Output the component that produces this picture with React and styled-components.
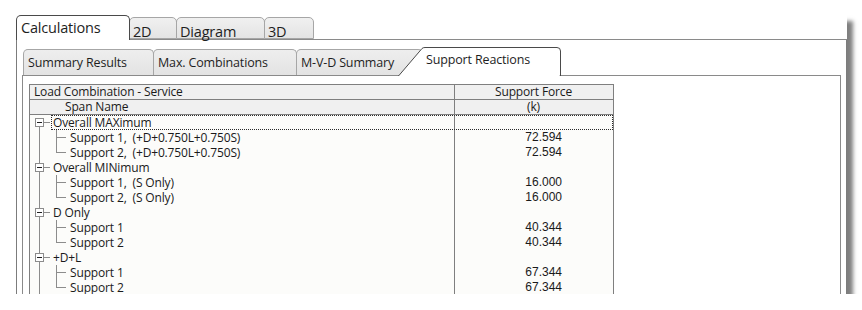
import React from 'react';
import styled, { createGlobalStyle } from 'styled-components';

const GlobalStyle = createGlobalStyle`
  html, body {
    margin: 0;
    padding: 0;
    background: #ffffff;
  }
  body {
    font-family: "Open Sans", "Noto Sans", sans-serif;
    color: #1e1e1e;
  }
`;

const Window = styled.div`
  margin: 15px 0 0 16px;
  width: 831px;
  height: 279px;
  display: flex;
  flex-direction: column;
  background: #ffffff;
  box-shadow: 6px 6px 4px rgba(0, 0, 0, 0.5);
  overflow: hidden;
`;

const TopTabs = styled.div`
  display: flex;
  align-items: flex-end;
  height: 24px;
  border-bottom: 1px solid #8a8a8a;
  margin-left: 113px;
  position: relative;
`;

const TopTabRow = styled.div`
  display: flex;
  align-items: flex-end;
  margin-left: -113px;
`;

const TopTab = styled.div`
  box-sizing: border-box;
  width: ${p => p.w}px;
  height: ${p => (p.active ? 25 : 22)}px;
  margin-left: ${p => (p.first ? 0 : -1)}px;
  margin-bottom: ${p => (p.active ? -1 : 0)}px;
  padding: ${p => (p.active ? '4px 0 0 4px' : '6px 0 0 3px')};
  border: 1px solid ${p => (p.active ? '#4a4a4a' : '#a6a6a6')};
  border-bottom: ${p => (p.active ? 'none' : '1px solid #a6a6a6')};
  border-radius: 5px 5px 0 0;
  background: ${p => (p.active ? '#ffffff' : 'linear-gradient(#f0f0f0, #e4e4e4)')};
  font-size: 14.5px;
  line-height: 16px;
  letter-spacing: -0.2px;
  white-space: nowrap;
  position: relative;
  z-index: ${p => (p.active ? 2 : 1)};
`;

const MainPanel = styled.div`
  flex: 1;
  display: flex;
  flex-direction: column;
  min-height: 0;
  border-left: 1px solid #7c7c7c;
  border-right: 1px solid #7c7c7c;
  padding: 7px 5px 0 5px;
`;

const SubTabs = styled.div`
  display: flex;
  align-items: flex-end;
  height: 28px;
  padding-left: 1px;
  border-bottom: 1px solid #8a8a8a;
`;

const SubTab = styled.div`
  box-sizing: border-box;
  width: ${p => p.w}px;
  height: 26px;
  margin-left: ${p => (p.first ? 0 : -1)}px;
  padding: 5px 0 0 4px;
  border: 1px solid #a6a6a6;
  border-bottom: none;
  border-radius: 5px 5px 0 0;
  background: linear-gradient(#eeeeee, #e3e3e3);
  font-size: 12.5px;
  line-height: 16px;
  letter-spacing: -0.15px;
  white-space: nowrap;
`;

const ActiveSubTab = styled.div`
  box-sizing: border-box;
  position: relative;
  width: 164px;
  height: 29px;
  margin-left: -25px;
  margin-bottom: -1px;
  padding: 5px 0 0 28px;
  font-size: 12.5px;
  line-height: 16px;
  letter-spacing: -0.15px;
  white-space: nowrap;
  z-index: 2;

  svg {
    position: absolute;
    left: 0;
    top: 0;
    z-index: -1;
  }
`;

const InnerPanel = styled.div`
  flex: 1;
  min-height: 0;
  border-left: 1px solid #8a8a8a;
  border-right: 1px solid #8a8a8a;
  padding: 8px 0 0 6px;
  overflow: hidden;
`;

const Grid = styled.div`
  width: 583px;
  border: 1px solid #7f7f7f;
  border-bottom: none;
  background: #fcfcfa;
  font-size: 12px;
  letter-spacing: -0.15px;
  color: #1a1a1a;
`;

const HeadRow = styled.div`
  display: grid;
  grid-template-columns: 424px 158px;
  height: 14px;
  border-bottom: 1px solid #7f7f7f;
  background: #f0f0f0;
  line-height: 14px;
`;

const HeadCell = styled.div`
  padding-left: ${p => p.indent || 0}px;
  text-align: ${p => (p.center ? 'center' : 'left')};
  border-left: ${p => (p.divided ? '1px solid #7f7f7f' : 'none')};
  white-space: pre;
`;

const Row = styled.div`
  display: grid;
  grid-template-columns: 424px 158px;
  height: 15px;
  line-height: 15px;
  position: relative;

  &::after {
    content: '';
    display: ${p => (p.focused ? 'block' : 'none')};
    position: absolute;
    left: 21px;
    right: 0;
    top: 0;
    bottom: 0;
    border: 1px dotted #2a2a2a;
    pointer-events: none;
  }
`;

const NameCell = styled.div`
  display: flex;
  align-items: center;
  white-space: pre;

  svg {
    flex: none;
    display: block;
  }
`;

const ValueCell = styled.div`
  border-left: 1px solid #7f7f7f;
  text-align: right;
  padding-right: 50px;
  font-family: "Liberation Sans", Arial, sans-serif;
  font-size: 12px;
  letter-spacing: 0;
  color: #1a1a1a;
`;

const LINE = '#8c8c8c';

function ParentGlyph({ first }) {
  return (
    <svg width="23" height="15" viewBox="0 0 23 15">
      {!first && <line x1="9.5" y1="0" x2="9.5" y2="3" stroke={LINE} />}
      <line x1="9.5" y1="12" x2="9.5" y2="15" stroke={LINE} />
      <line x1="14" y1="7.5" x2="20" y2="7.5" stroke={LINE} />
      <rect x="5.5" y="3.5" width="8" height="8" fill="#ffffff" stroke={LINE} />
      <line x1="7" y1="7.5" x2="12" y2="7.5" stroke="#202020" />
    </svg>
  );
}

function ChildGlyph({ last }) {
  return (
    <svg width="40" height="15" viewBox="0 0 40 15">
      <line x1="9.5" y1="0" x2="9.5" y2="15" stroke={LINE} />
      <line x1="26.5" y1="0" x2="26.5" y2={last ? 8 : 15} stroke={LINE} />
      <line x1="27" y1="7.5" x2="36" y2="7.5" stroke={LINE} />
    </svg>
  );
}

const groups = [
  {
    name: 'Overall MAXimum',
    items: [
      ['Support 1,  (+D+0.750L+0.750S)', '72.594'],
      ['Support 2,  (+D+0.750L+0.750S)', '72.594'],
    ],
  },
  {
    name: 'Overall MINimum',
    items: [
      ['Support 1,  (S Only)', '16.000'],
      ['Support 2,  (S Only)', '16.000'],
    ],
  },
  {
    name: 'D Only',
    items: [
      ['Support 1', '40.344'],
      ['Support 2', '40.344'],
    ],
  },
  {
    name: '+D+L',
    items: [
      ['Support 1', '67.344'],
      ['Support 2', '67.344'],
    ],
  },
];

const topTabs = [
  { label: 'Calculations', w: 114, active: true },
  { label: '2D', w: 48 },
  { label: 'Diagram', w: 89 },
  { label: '3D', w: 50 },
];

const subTabs = [
  { label: 'Summary Results', w: 131 },
  { label: 'Max. Combinations', w: 144 },
  { label: 'M-V-D Summary', w: 127 },
];

export default function App() {
  return (
    <>
      <GlobalStyle />
      <Window>
        <TopTabs>
          <TopTabRow>
            {topTabs.map((t, i) => (
              <TopTab key={t.label} w={t.w} active={t.active} first={i === 0}>
                {t.label}
              </TopTab>
            ))}
          </TopTabRow>
        </TopTabs>
        <MainPanel>
          <SubTabs>
            {subTabs.map((t, i) => (
              <SubTab key={t.label} w={t.w} first={i === 0}>
                {t.label}
              </SubTab>
            ))}
            <ActiveSubTab>
              <svg width="164" height="29" viewBox="0 0 164 29">
                <path
                  d="M0.5 29 L24 1.5 Q25 0.5 27 0.5 L159 0.5 Q162.5 0.5 162.5 4 L162.5 29 Z"
                  fill="#ffffff"
                  stroke="#4a4a4a"
                />
                <rect x="1.5" y="28" width="160" height="1" fill="#ffffff" />
              </svg>
              Support Reactions
            </ActiveSubTab>
          </SubTabs>
          <InnerPanel>
            <Grid>
              <HeadRow>
                <HeadCell indent={4}>Load Combination - Service</HeadCell>
                <HeadCell divided center>Support Force</HeadCell>
              </HeadRow>
              <HeadRow>
                <HeadCell indent={35}>Span Name</HeadCell>
                <HeadCell divided center>(k)</HeadCell>
              </HeadRow>
              {groups.map((g, gi) => (
                <React.Fragment key={g.name}>
                  <Row focused={gi === 0}>
                    <NameCell>
                      <ParentGlyph first={gi === 0} />
                      {g.name}
                    </NameCell>
                    <ValueCell />
                  </Row>
                  {g.items.map(([label, value], ii) => (
                    <Row key={label + ii}>
                      <NameCell>
                        <ChildGlyph last={ii === g.items.length - 1} />
                        {label}
                      </NameCell>
                      <ValueCell>{value}</ValueCell>
                    </Row>
                  ))}
                </React.Fragment>
              ))}
            </Grid>
          </InnerPanel>
        </MainPanel>
      </Window>
    </>
  );
}
